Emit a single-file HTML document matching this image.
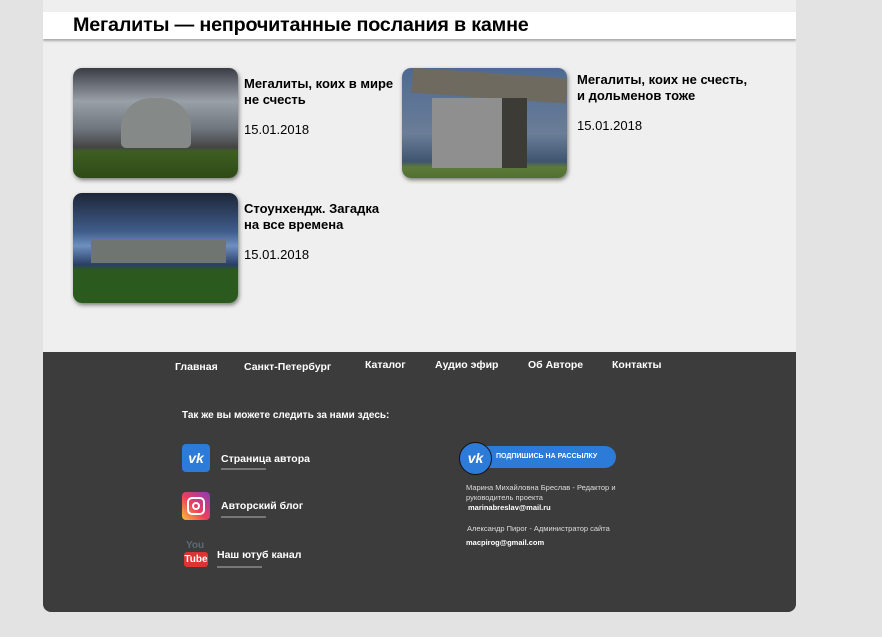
<!DOCTYPE html>
<html><head><meta charset="utf-8"><style>
*{margin:0;padding:0;box-sizing:border-box}
body{width:882px;height:637px;background:#e3e3e3;font-family:"Liberation Sans",sans-serif;position:relative;overflow:hidden}
.panel{position:absolute;left:43px;top:0;width:753px;height:612px;background:#efefef;border-radius:0 0 8px 8px;overflow:hidden}
.hdr{position:absolute;left:0;top:12px;width:753px;height:27px;background:#fff;box-shadow:0 2px 2px #aaa}
.hdr h1{position:absolute;left:30px;top:3px;font-size:19px;font-weight:bold;color:#000;letter-spacing:-0.2px;transform:scaleX(1.04);transform-origin:left}
.img{position:absolute;width:165px;height:110px;border-radius:9px;box-shadow:1px 2px 4px rgba(0,0,0,.5);overflow:hidden}
.t{position:absolute;font-size:13px;font-weight:bold;line-height:16px;color:#000}
.d{position:absolute;font-size:13px;color:#000}
.ft{position:absolute;left:0;top:352px;width:753px;height:260px;background:#3c3c3c;color:#fff}
.nav{position:absolute;font-size:10.5px;font-weight:bold;top:8px}
.ico{position:absolute;width:28px;height:28px;border-radius:4px}
.lk{position:absolute;font-size:10.5px;font-weight:bold}
.ul{position:absolute;height:2px;background:#777}
.sm{position:absolute;font-size:7.5px;color:#ddd;line-height:10px}
</style></head><body>
<div class="panel">
<div class="hdr"><h1>Мегалиты — непрочитанные послания в камне</h1></div>

<div class="img" style="left:30px;top:68px;background:linear-gradient(180deg,#3a3d44 0%,#9aa0a8 30%,#70767e 55%,#444 72%,#3e5e22 76%,#2e4a18 100%)">
<div style="position:absolute;left:48px;top:30px;width:70px;height:50px;background:#858a88;border-radius:30px 30px 5px 5px"></div></div>
<div class="t" style="left:201px;top:76px">Мегалиты, коих в мире<br>не счесть</div>
<div class="d" style="left:201px;top:122px">15.01.2018</div>

<div class="img" style="left:359px;top:68px;background:linear-gradient(180deg,#4d6a94 0%,#6b7d97 60%,#3f5570 85%,#5d7a3a 90%,#52702f 100%)">
<div style="position:absolute;left:10px;top:5px;width:155px;height:25px;background:#6e6a60;transform:rotate(4deg)"></div>
<div style="position:absolute;left:30px;top:30px;width:90px;height:70px;background:#8e8f8e"></div>
<div style="position:absolute;left:100px;top:30px;width:25px;height:70px;background:#3c3b36"></div></div>
<div class="t" style="left:534px;top:72px">Мегалиты, коих не счесть,<br>и дольменов тоже</div>
<div class="d" style="left:534px;top:118px">15.01.2018</div>

<div class="img" style="left:30px;top:193px;background:linear-gradient(180deg,#1d2638 0%,#3f5c8a 35%,#6e8fc0 48%,#2a3f66 65%,#2c5a1e 70%,#2a5a1d 100%)">
<div style="position:absolute;left:18px;top:46px;width:135px;height:24px;background:#6f7570"></div></div>
<div class="t" style="left:201px;top:201px">Стоунхендж. Загадка<br>на все времена</div>
<div class="d" style="left:201px;top:247px">15.01.2018</div>

<div class="ft">
<div class="nav" style="left:132px;top:9px">Главная</div>
<div class="nav" style="left:201px;top:9px">Санкт-Петербург</div>
<div class="nav" style="left:322px;top:7px">Каталог</div>
<div class="nav" style="left:392px;top:7px">Аудио эфир</div>
<div class="nav" style="left:485px;top:7px">Об Авторе</div>
<div class="nav" style="left:569px;top:7px">Контакты</div>
<div class="lk" style="left:139px;top:58px;font-size:10px">Так же вы можете следить за нами здесь:</div>

<div class="ico" style="left:139px;top:92px;background:#2d7bd8;color:#fff;font-weight:bold;font-size:14px;text-align:center;line-height:28px;font-style:italic">vk</div>
<div class="lk" style="left:178px;top:101px">Страница автора</div>
<div class="ul" style="left:178px;top:116px;width:45px"></div>

<div class="ico" style="left:139px;top:140px;background:linear-gradient(45deg,#f9c23c,#ef3e5c 45%,#8a3ab9)"><div style="position:absolute;left:5px;top:5px;width:18px;height:18px;border:2px solid #fff;border-radius:5px"></div><div style="position:absolute;left:10px;top:10px;width:8px;height:8px;border:2px solid #fff;border-radius:50%"></div></div>
<div class="lk" style="left:178px;top:148px">Авторский блог</div>
<div class="ul" style="left:178px;top:164px;width:45px"></div>

<div style="position:absolute;left:143px;top:188px;font-size:10px;color:#5a6a78;font-weight:bold">You</div>
<div style="position:absolute;left:141px;top:200px;width:24px;height:15px;background:#d33;border-radius:3px;font-size:10px;font-weight:bold;text-align:center;line-height:15px">Tube</div>
<div class="lk" style="left:174px;top:197px">Наш ютуб канал</div>
<div class="ul" style="left:174px;top:214px;width:45px"></div>

<div style="position:absolute;left:420px;top:94px;width:153px;height:22px;background:#2d7bd8;border-radius:11px;font-size:7px;font-weight:bold;line-height:22px;padding-left:33px">ПОДПИШИСЬ НА РАССЫЛКУ</div>
<div style="position:absolute;left:416px;top:90px;width:33px;height:33px;background:#2d7bd8;border:1px solid #111;border-radius:50%;text-align:center;line-height:31px;font-weight:bold;font-style:italic;font-size:14px">vk</div>
<div class="sm" style="left:423px;top:131px">Марина Михайловна Бреслав - Редактор и<br>руководитель проекта</div>
<div class="sm" style="left:425px;top:151px;font-weight:bold;color:#fff">marinabreslav@mail.ru</div>
<div class="sm" style="left:424px;top:172px">Александр Пирог - Администратор сайта</div>
<div class="sm" style="left:423px;top:186px;font-weight:bold;color:#fff">macpirog@gmail.com</div>
</div>
</div>
</body></html>
